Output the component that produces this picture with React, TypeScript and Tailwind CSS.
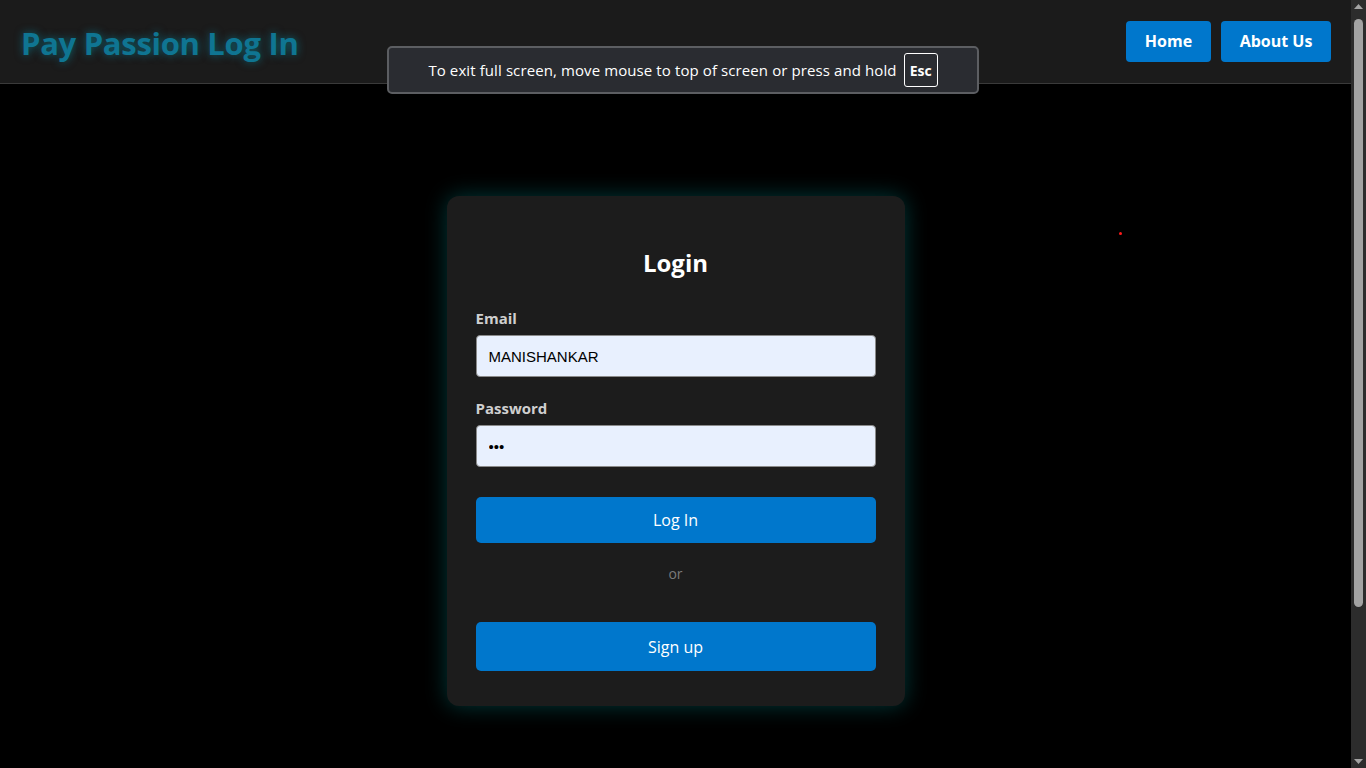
import React from 'react';

const ui = { fontFamily: '"Open Sans", "Noto Sans", sans-serif' };
const arial = { fontFamily: '"Liberation Sans", Arial, sans-serif' };

function Header() {
  return (
    <header className="h-[84px] shrink-0 bg-[#1b1b1b] border-b border-[#3a3a3a] flex items-center justify-between pl-[21px] pr-[20px]">
      <h1
        className="text-[31px] font-bold text-[#0f7592] tracking-[-0.3px] mt-[4px]"
        style={{ ...ui, textShadow: '0 0 8px rgba(0, 170, 200, 0.5)' }}
      >
        Pay Passion Log In
      </h1>
      <nav className="flex gap-[10px] mt-[-1px]">
        <button className="h-[41px] w-[85px] rounded-[4px] bg-[#0077cc] text-white font-bold text-[16px]" style={ui}>
          Home
        </button>
        <button className="h-[41px] w-[110px] rounded-[4px] bg-[#0077cc] text-white font-bold text-[16px]" style={ui}>
          About Us
        </button>
      </nav>
    </header>
  );
}

function FullscreenToast() {
  return (
    <div className="absolute left-[387px] top-[46px] w-[592px] h-[48px] rounded-[5px] border-2 border-[#5c5e62] bg-[#2a2c31] flex items-center justify-center gap-[7px]">
      <span className="text-white text-[15px] tracking-[0.1px]" style={ui}>
        To exit full screen, move mouse to top of screen or press and hold
      </span>
      <span
        className="h-[34px] px-[5px] rounded-[3px] border border-white text-white text-[14px] font-bold flex items-center"
        style={ui}
      >
        Esc
      </span>
    </div>
  );
}

function Scrollbar() {
  return (
    <div className="w-[15px] shrink-0 bg-[#2c2c2c] flex flex-col items-center pt-[3px] pb-[3px]">
      <svg width="9" height="6" viewBox="0 0 9 6">
        <path d="M0 6 L4.5 1 L9 6 Z" fill="#a3a3a3" />
      </svg>
      <div className="mt-[10px] w-[9px] h-[588px] rounded-full bg-[#a3a3a3]" />
      <div className="flex-1" />
      <svg width="9" height="6" viewBox="0 0 9 6">
        <path d="M0 0 L4.5 5 L9 0 Z" fill="#a3a3a3" />
      </svg>
    </div>
  );
}

function Field({ label, type, value }: { label: string; type: string; value: string }) {
  return (
    <div className="flex flex-col">
      <label className="text-[#cfcfcf] text-[15px] font-bold mb-[7px] leading-[20px]" style={ui}>
        {label}
      </label>
      <input
        type={type}
        defaultValue={value}
        readOnly
        className="h-[42px] w-full rounded-[4px] border border-[#8a8a8a] bg-[#e8f0fe] px-[12px] text-[15px] text-black outline-none"
        style={arial}
      />
    </div>
  );
}

function LoginCard() {
  return (
    <div
      className="w-[458px] rounded-[12px] bg-[#1c1c1c] px-[29px] pt-[51px] pb-[35px]"
      style={{ boxShadow: '0 0 22px rgba(0, 160, 160, 0.35)' }}
    >
      <h2 className="text-center text-white text-[24px] font-bold leading-[32px] mb-[29px]" style={ui}>
        Login
      </h2>
      <div className="flex flex-col gap-[21px]">
        <Field label="Email" type="text" value="MANISHANKAR" />
        <Field label="Password" type="password" value="abc" />
      </div>
      <button className="mt-[30px] h-[46px] w-full rounded-[5px] bg-[#0077cc] text-white text-[16px]" style={ui}>
        Log In
      </button>
      <p className="text-center text-[#7a7a7a] text-[14px] mt-[20px] mb-[38px]" style={ui}>
        or
      </p>
      <button className="h-[49px] w-full rounded-[5px] bg-[#0077cc] text-white text-[16px]" style={ui}>
        Sign up
      </button>
    </div>
  );
}

export default function App() {
  return (
    <div className="relative h-[768px] overflow-hidden bg-black flex">
      <div className="flex-1 flex flex-col min-w-0">
        <Header />
        <main className="flex justify-center pt-[112px]">
          <LoginCard />
        </main>
      </div>
      <Scrollbar />
      <FullscreenToast />
      <div className="absolute left-[1119px] top-[232px] w-[3px] h-[3px] rounded-full bg-[#ff1a1a]" />
    </div>
  );
}
